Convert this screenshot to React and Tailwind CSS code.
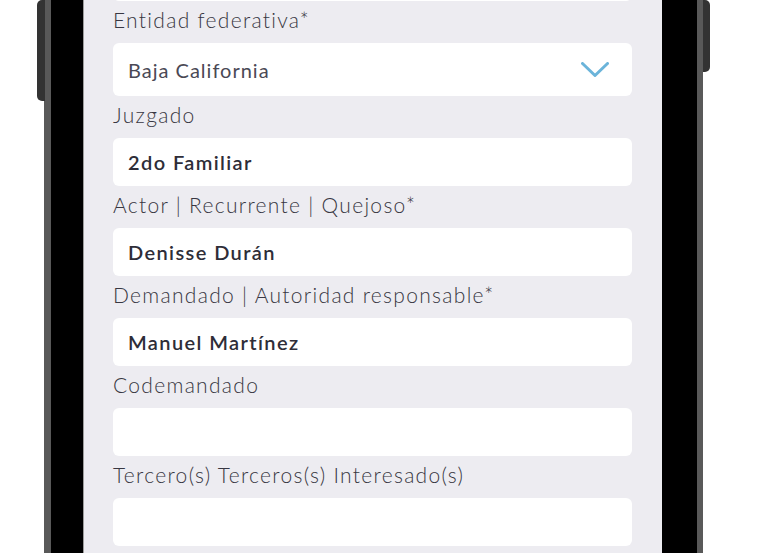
const fields = [
    { label: "Juzgado", value: "2do Familiar" },
    { label: "Actor | Recurrente | Quejoso*", value: "Denisse Durán" },
    { label: "Demandado | Autoridad responsable*", value: "Manuel Martínez" },
    { label: "Codemandado", value: "" },
    { label: "Tercero(s) Terceros(s) Interesado(s)", value: "" },
]

function Label({ children }) {
    return (
        <div className="h-[42px] flex items-center pb-[5px] text-[21px] font-light tracking-[1.3px] text-[#383742] leading-none">
            {children}
        </div>
    )
}

function App() {
    return (
        <div className="w-[768px] h-[553px] bg-white flex overflow-hidden font-['Lato',sans-serif]">
            <div className="w-[37px] shrink-0" />
            <div className="w-[8px] h-[101px] shrink-0 bg-[#333333] rounded-l-[5px] -mr-[1px] relative z-10" />

            {/* phone body */}
            <div className="w-[659px] h-full shrink-0 flex bg-black border-l-[7px] border-r-[6px] border-[#595959]">
                <div className="w-[33px] shrink-0 border-r border-[#9c9c9c]" />
                <div className="w-[578px] h-full shrink-0 bg-[#edecf1] overflow-hidden pl-[29px] pr-[30px]">
                    <div className="flex flex-col -mt-[47px]">
                        <div className="h-[48px] bg-white rounded-[6px]" />

                        <Label>Entidad federativa*</Label>
                        <div className="h-[53px] bg-white rounded-[6px] flex items-center justify-between pl-[15px] pr-[23px]">
                            <span className="text-[20px] tracking-[1px] text-[#4a4955] leading-none">Baja California</span>
                            <svg width="28" height="15" viewBox="0 0 28 15" fill="none" stroke="#6bb4da" strokeWidth="3" strokeLinecap="round" strokeLinejoin="round">
                                <polyline points="1.5,1.5 14,13.5 26.5,1.5" />
                            </svg>
                        </div>

                        {fields.map((field) => (
                            <div key={field.label} className="flex flex-col">
                                <Label>{field.label}</Label>
                                <div className="h-[48px] bg-white rounded-[6px] flex items-center pl-[15px]">
                                    <span className="text-[20px] font-semibold tracking-[1.4px] text-[#2e2d38] leading-none">{field.value}</span>
                                </div>
                            </div>
                        ))}
                    </div>
                </div>
                <div className="w-[34px] shrink-0" />
            </div>

            <div className="w-[7px] h-[72px] shrink-0 bg-[#333333] rounded-r-[5px]" />
        </div>
    )
}

export default App
